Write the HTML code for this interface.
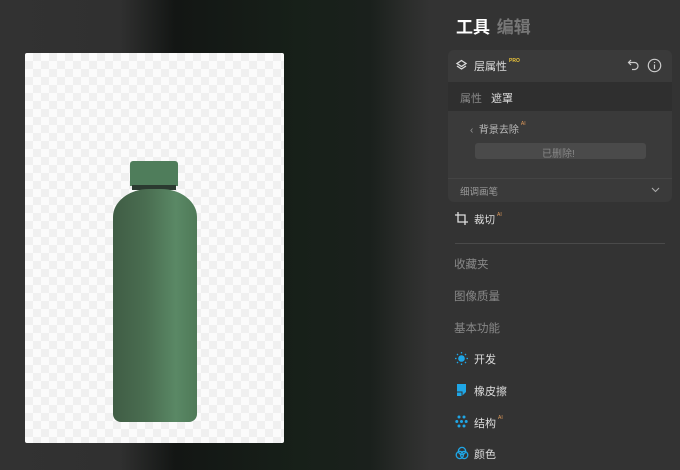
<!DOCTYPE html>
<html><head><meta charset="utf-8"><style>
*{margin:0;padding:0;box-sizing:border-box}
body{width:680px;height:470px;overflow:hidden;background:#333;font-family:"Liberation Sans","Noto Sans CJK SC",sans-serif;position:relative}
.bg{position:absolute;left:0;top:0;width:440px;height:470px;background:linear-gradient(90deg,#323232 0,#303030 120px,#131614 175px,#172019 300px,#1a201c 370px,#2a2c2a 405px,#333 430px)}
.img{position:absolute;left:25px;top:53px;width:259px;height:390px;border-radius:2px;background-color:#fbfbfb;background-image:linear-gradient(45deg,#f0f0f0 25%,transparent 25%,transparent 75%,#f0f0f0 75%),linear-gradient(45deg,#f0f0f0 25%,transparent 25%,transparent 75%,#f0f0f0 75%);background-size:16px 16px;background-position:0 0,8px 8px;overflow:hidden}
.cap{position:absolute;left:105px;top:108px;width:48px;height:25px;background:#4f7d5b;border-radius:3px 3px 0 0}
.ring{position:absolute;left:107px;top:132px;width:44px;height:5px;background:#2b3a30}
.body{position:absolute;left:88px;top:136px;width:84px;height:233px;background:linear-gradient(90deg,#405d45 0,#4a6e51 40%,#5a8865 75%,#4f7a58 100%);border-radius:36px 36px 8px 8px / 28px 28px 8px 8px}
.t{position:absolute;color:#ddd;font-size:11px;white-space:nowrap}
.card{position:absolute;left:448px;top:50px;width:224px;height:152px;background:#3a3a3a;border-radius:6px;overflow:hidden}
.ai{font-size:5px;color:#e09a5a;vertical-align:top;margin-left:2px}
</style></head><body>
<div class="bg"></div>
<div class="img"><div class="cap"></div><div class="ring"></div><div class="body"></div></div>
<div class="t" style="left:456px;top:13px;font-size:17px;font-weight:bold;color:#fff">工具 <span style="color:#777;margin-left:2px">编辑</span></div>
<div class="card">
 <div style="position:absolute;left:0;top:32px;width:224px;height:29px;background:#2f2f2f"></div>
 <div style="position:absolute;left:0;top:128px;width:224px;height:1px;background:#444"></div>
 <div style="position:absolute;left:27px;top:93px;width:171px;height:16px;background:#4a4a4a;border-radius:3px"></div>
</div>
<svg style="position:absolute;left:455px;top:59px" width="13" height="13" viewBox="0 0 13 13" fill="none" stroke="#ddd" stroke-width="1.3"><path d="M6.5 1.5L11 4.5 6.5 7.5 2 4.5z"/><path d="M2 7l4.5 3 4.5-3"/></svg>
<div class="t" style="left:474px;top:58px;font-size:11px;color:#ddd">层属性<span style="font-size:5px;color:#e8c23a;vertical-align:top;margin-left:2px;font-weight:bold">PRO</span></div>
<svg style="position:absolute;left:627px;top:58px" width="13" height="13" viewBox="0 0 13 13" fill="none" stroke="#ccc" stroke-width="1.2"><path d="M4 2L1.5 4.5 4 7"/><path d="M1.5 4.5h6a3.5 3.5 0 010 7H5"/></svg>
<svg style="position:absolute;left:647px;top:58px" width="15" height="15" viewBox="0 0 15 15" fill="none" stroke="#ccc" stroke-width="1.2"><circle cx="7.5" cy="7.5" r="6.2"/><path d="M7.5 6.5v4.5M7.5 4v1"/></svg>
<div class="t" style="left:460px;top:90px;color:#888">属性</div>
<div class="t" style="left:491px;top:90px;color:#ddd">遮罩</div>
<div class="t" style="left:470px;top:121px;color:#999;font-size:10px">‹&nbsp; <span style="color:#bbb">背景去除</span><span class="ai">AI</span></div>
<div class="t" style="left:542px;top:145px;color:#888;font-size:10px">已删除!</div>
<div class="t" style="left:460px;top:184px;color:#999;font-size:9.5px">细调画笔</div>
<svg style="position:absolute;left:651px;top:186px" width="9" height="7" viewBox="0 0 9 7" fill="none" stroke="#aaa" stroke-width="1.1"><path d="M1 2l3.5 3.5L8 2"/></svg>
<svg style="position:absolute;left:455px;top:212px" width="13" height="13" viewBox="0 0 13 13" fill="none" stroke="#ddd" stroke-width="1.3"><path d="M3 0v10h10M0 3h10v10"/></svg>
<div class="t" style="left:474px;top:212px;font-size:10.5px">裁切<span class="ai">AI</span></div>
<div style="position:absolute;left:455px;top:243px;width:210px;height:1px;background:#4a4a4a"></div>
<div class="t" style="left:454px;top:256px;color:#888;font-size:11.5px">收藏夹</div>
<div class="t" style="left:454px;top:288px;color:#888;font-size:11.5px">图像质量</div>
<div class="t" style="left:454px;top:320px;color:#888;font-size:11.5px">基本功能</div>
<svg style="position:absolute;left:455px;top:352px" width="13" height="13" viewBox="0 0 13 13"><circle cx="6.5" cy="6.5" r="3.3" fill="#1fa6e6"/><g stroke="#1fa6e6" stroke-width="1.3"><path d="M6.5 0v1.5M6.5 11.5V13M0 6.5h1.5M11.5 6.5H13M2 2l1 1M10 10l1 1M2 11l1-1M10 3l1-1"/></g></svg>
<div class="t" style="left:474px;top:351px">开发</div>
<svg style="position:absolute;left:456px;top:383px" width="11" height="14" viewBox="0 0 11 14"><path d="M1 1h9v8l-4 4H1z" fill="#1fa6e6"/><path d="M1 9h5v4" fill="none" stroke="#333" stroke-width="1"/></svg>
<div class="t" style="left:474px;top:383px">橡皮擦</div>
<svg style="position:absolute;left:455px;top:415px" width="13" height="13" viewBox="0 0 13 13" fill="#1fa6e6"><circle cx="4" cy="2" r="1.5"/><circle cx="9" cy="2" r="1.5"/><circle cx="1.8" cy="6.5" r="1.5"/><circle cx="6.5" cy="6.5" r="1.5"/><circle cx="11.2" cy="6.5" r="1.5"/><circle cx="4" cy="11" r="1.5"/><circle cx="9" cy="11" r="1.5"/></svg>
<div class="t" style="left:474px;top:415px">结构<span class="ai">AI</span></div>
<svg style="position:absolute;left:455px;top:446px" width="14" height="14" viewBox="0 0 14 14" fill="none" stroke="#1fa6e6" stroke-width="1.3"><circle cx="7" cy="5" r="3.6"/><circle cx="4.8" cy="9" r="3.6"/><circle cx="9.2" cy="9" r="3.6"/></svg>
<div class="t" style="left:474px;top:446px">颜色</div>
</body></html>
